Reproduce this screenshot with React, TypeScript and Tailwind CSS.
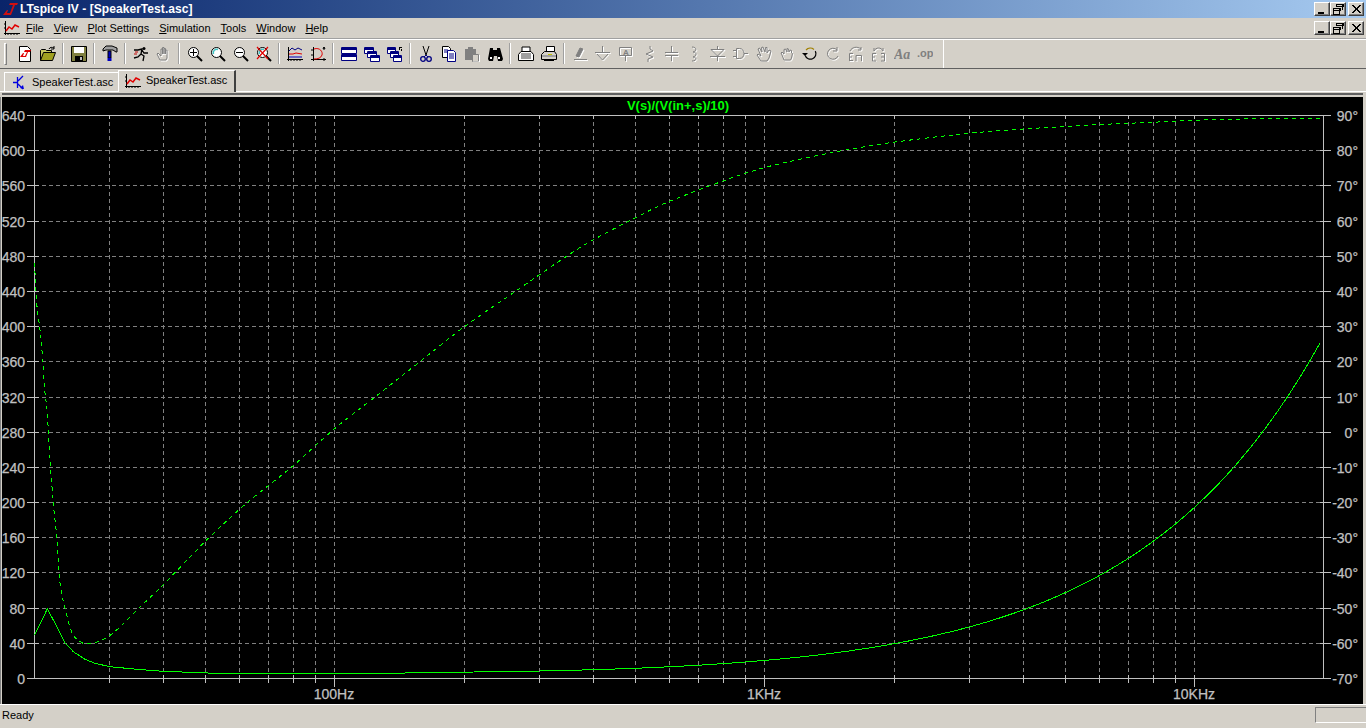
import type { ReactNode } from 'react';

const FONT = "font-['Liberation_Sans',Arial,sans-serif]";

// page coordinates of the plot box
const LEFT = 34.5;
const RIGHT = 1323.5;
const TOP = 115;
const BOTTOM = 678;

const freqX = (f: number) => 334.3 + 430 * Math.log10(f / 100);

const MINOR = [
  30, 40, 50, 60, 70, 80, 90, 100, 200, 300, 400, 500, 600, 700, 800, 900, 1000, 2000, 3000, 4000, 5000, 6000, 7000,
  8000, 9000, 10000,
];
const LEFT_LABELS = ['640', '600', '560', '520', '480', '440', '400', '360', '320', '280', '240', '200', '160', '120', '80', '40', '0'];
const RIGHT_LABELS = ['90°', '80°', '70°', '60°', '50°', '40°', '30°', '20°', '10°', '0°', '-10°', '-20°', '-30°', '-40°', '-50°', '-60°', '-70°'];

const MAG_LOW: [number, number][] = [
  [34.5, 635], [47.3, 609], [55, 623], [65, 642.7], [73.3, 651.7], [85, 659.3], [95, 663.3], [110, 666.7],
  [137, 669.3], [163, 671.3], [213, 673.2], [334, 673.6], [400, 673.2],
];
const PHASE_POINTS: [number, number][] = [
  [34.5, 263], [36.7, 303], [40, 330], [42.7, 360], [45, 393], [47.3, 413], [50, 460], [53.3, 503], [56.7, 537],
  [60, 583], [65, 608], [71.7, 632], [78, 640], [86.7, 644], [101.7, 640], [116.7, 630], [140, 607], [163, 585],
  [206.7, 540], [246.7, 503], [291.7, 467], [333, 430], [375, 397], [417, 364], [464, 327], [513, 293], [567, 256],
  [593, 240], [635, 218], [668, 202], [723, 181], [763, 168], [800, 159.3], [842, 150.7], [893, 142.3], [969, 133.3],
  [1023, 129], [1064, 126.7], [1098, 124.6], [1152, 122.3], [1195, 120.3], [1233, 119.3], [1273, 118.3], [1323, 118.3],
];

// above 200Hz the magnitude is just R + jwL
function magnitudePoints() {
  const pts = MAG_LOW.map(([x, y]) => `${x},${y}`);
  for (let x = 420; x <= 1323; x += 6) {
    const f = Math.pow(10, (x - 334.3) / 430) / 10;
    const xl = 19.2 * Math.pow(f, 1.004);
    const z = Math.sqrt(5.5 * 5.5 + xl * xl);
    pts.push(`${x},${(678 - z / 1.137).toFixed(1)}`);
  }
  return pts.join(' ');
}

// catmull-rom through the read-off points
function smoothPath(p: [number, number][]) {
  let d = `M${p[0][0]} ${p[0][1]}`;
  for (let i = 0; i < p.length - 1; i++) {
    const a = p[Math.max(i - 1, 0)];
    const b = p[i];
    const c = p[i + 1];
    const e = p[Math.min(i + 2, p.length - 1)];
    d += `C${(b[0] + (c[0] - a[0]) / 6).toFixed(1)} ${(b[1] + (c[1] - a[1]) / 6).toFixed(1)} ${(c[0] - (e[0] - b[0]) / 6).toFixed(1)} ${(c[1] - (e[1] - b[1]) / 6).toFixed(1)} ${c[0]} ${c[1]}`;
  }
  return d;
}

function Icon({ children, w = 16, h = 16 }: { children: ReactNode; w?: number; h?: number }) {
  return (
    <svg width={w} height={h} viewBox={`0 0 ${w} ${h}`} className="block shrink-0">
      {children}
    </svg>
  );
}

function Ghost({ d, fill }: { d: string; fill?: boolean }) {
  return (
    <>
      <path d={d} transform="translate(1 1)" stroke="#fff" fill={fill ? '#fff' : 'none'} />
      <path d={d} stroke="#808080" fill={fill ? '#808080' : 'none'} />
    </>
  );
}

function PlotGlyph() {
  return (
    <>
      <path d="M1.500 1v14M0 13.500h16M4 13v2M7 13v2M10 13v2M13 13v2M0 4h2M0 8h2" stroke="#000" fill="none" />
      <path d="M2 11l3-4 3 2 3-4 4 2" stroke="#e00000" strokeWidth="1.500" fill="none" />
    </>
  );
}

function Lens({ children }: { children?: ReactNode }) {
  return (
    <>
      <circle cx="6.500" cy="6.500" r="5" fill="#fff" stroke="#000" />
      {children}
      <path d="M10 10l5 5" stroke="#000" strokeWidth="2" />
    </>
  );
}

const ICONS: ReactNode[][] = [
  [
    <Icon key="new">
      <path d="M2.500 .5h8l3 3v12h-11z" fill="#fff" stroke="#000" />
      <path d="M3 11l3-4h1l-1 3h2l2-4H7l1-2h6l-1 2h-2l-2 5H3z" fill="#e00000" />
    </Icon>,
    <Icon key="open">
      <path d="M.5 14.500v-10l1-1h4l1 1h5v2" fill="#c8c860" stroke="#000" />
      <path d="M.5 14.500l3-8h12l-3 8z" fill="#a0a020" stroke="#000" />
      <path d="M9 3c1-2 3-2 5-1M14 0v3h-3" stroke="#000" fill="none" />
    </Icon>,
  ],
  [
    <Icon key="save">
      <path d="M.5 .5h15v15H.5z" fill="#808040" stroke="#000" />
      <path d="M3 1h10v6H3z" fill="#fff" />
      <path d="M4 10h8v5H4z" fill="#000" />
      <path d="M9 11h2v3H9z" fill="#c0c0c0" />
    </Icon>,
  ],
  [
    <Icon key="build" h={17}>
      <path d="M1 4l3-3h6l5 2v4h-1l-3-2H4L1 6z" fill="#a0a0a0" stroke="#000" />
      <path d="M6 6h3v7H6z" fill="#0000c0" stroke="#000" />
      <path d="M5.500 13h4v3h-4z" fill="#0000c0" />
    </Icon>,
  ],
  [
    <Icon key="run">
      <circle cx="11" cy="2.500" r="1.500" fill="#000" />
      <path d="M1 4h4l4-1-1 5 3 2-1 5M8 8l-3 3-4 1M9 4l2 3h4" stroke="#000" strokeWidth="1.300" fill="none" />
      <path d="M2 6h3M1 8h3" stroke="#c00000" />
    </Icon>,
    <Icon key="halt">
      <Ghost d="M4 14L1 8l1-1 3 3V3h1.500v5V1.500H8V8V2.500h1.500V8V4H11v8l-1 2z" />
    </Icon>,
  ],
  [
    <Icon key="zin">
      <Lens>
        <path d="M3 6.500h7M6.500 3v7" stroke="#000" />
      </Lens>
    </Icon>,
    <Icon key="zfit">
      <Lens>
        <path d="M3.500 8A3.500 3.500 0 0 1 8 3.500" stroke="#40c0c0" strokeWidth="1.500" fill="none" />
      </Lens>
    </Icon>,
    <Icon key="zout">
      <Lens>
        <path d="M3 6.500h7" stroke="#000" />
      </Lens>
    </Icon>,
    <Icon key="zcancel">
      <Lens>
        <path d="M3.500 8A3.500 3.500 0 0 1 8 3.500" stroke="#40c0c0" strokeWidth="1.500" fill="none" />
      </Lens>
      <path d="M1 1l11 12M12 1L1 13" stroke="#e00000" strokeWidth="1.200" />
    </Icon>,
  ],
  [
    <Icon key="plots">
      <path d="M1.500 1v14M0 13.500h16M4 13v2M7 13v2M10 13v2M13 13v2" stroke="#000" fill="none" />
      <path d="M2 5l3-3 3 2 3-2 4 2" stroke="#000080" fill="none" />
      <path d="M2 8h4l3-1 6 1" stroke="#e00000" fill="none" />
      <path d="M2 11h13" stroke="#0000c0" fill="none" />
    </Icon>,
    <Icon key="autoscale">
      <path d="M3.500 1v14M1 13.500h15M1 4h3M1 9h3M14 1v3M13 3l1-2 1 2M14 15v-3" stroke="#000" fill="none" />
      <path d="M4 3c6-2 9 3 8 6s-4 4-8 4" stroke="#e00000" fill="none" />
    </Icon>,
  ],
  [
    <Icon key="tile">
      <path d="M.5 1.500h15v6H.5zM.5 8.500h15v6H.5z" fill="#fff" stroke="#000080" />
      <path d="M1 2h14v2H1zM1 9h14v2H1z" fill="#000080" />
    </Icon>,
    <Icon key="cascade">
      <path d="M.5 1.500h9v6h-9z" fill="#fff" stroke="#000080" />
      <path d="M3.500 5.500h9v6h-9z" fill="#fff" stroke="#000080" />
      <path d="M6.500 9.500h9v6h-9z" fill="#fff" stroke="#000080" />
      <path d="M1 2h8v2H1zM4 6h8v2H4zM7 10h8v2H7z" fill="#000080" />
    </Icon>,
    <Icon key="arrange">
      <path d="M.5 1.500h8v6h-8z" fill="#fff" stroke="#000080" />
      <path d="M3.500 5.500h8v6h-8z" fill="#fff" stroke="#000080" />
      <path d="M6.500 9.500h8v6h-8z" fill="#fff" stroke="#000080" />
      <path d="M1 2h7v2H1zM4 6h7v2H4zM7 10h7v2H7z" fill="#000080" />
      <path d="M12 1h3v1h-2v2h-1zM14 3h1v2h-1z" fill="#000" />
    </Icon>,
  ],
  [
    <Icon key="cut">
      <path d="M5 0l3 9M11 0L8 9" stroke="#000" fill="none" />
      <path d="M8 9l-2 2M8 9l2 2" stroke="#000080" />
      <circle cx="5" cy="13" r="2.300" fill="none" stroke="#000080" strokeWidth="1.300" />
      <circle cx="11" cy="13" r="2.300" fill="none" stroke="#000080" strokeWidth="1.300" />
    </Icon>,
    <Icon key="copy">
      <path d="M1.500 .5h6l2 2v9h-8z" fill="#fff" stroke="#000" />
      <path d="M6.500 4.500h6l2 2v9h-8z" fill="#fff" stroke="#000080" />
      <path d="M3 4h4M3 6h3M8 8h5M8 10h5M8 12h5" stroke="#000080" />
    </Icon>,
    <Icon key="paste">
      <path d="M1 3h3V1h5v2h3v11H1z" fill="#808080" />
      <path d="M8.500 8.500h6v7h-6z" fill="#d4d0c8" stroke="#808080" />
      <path d="M15.500 9v7H9" stroke="#fff" fill="none" />
    </Icon>,
    <Icon key="find">
      <path d="M3 2h3v2h4V2h3l3 11-1 2h-4l-1-5H7l-1 5H2l-1-2z" fill="#000" />
      <path d="M3 11h2v2H3zM11 11h2v2h-2z" fill="#fff" />
    </Icon>,
  ],
  [
    <Icon key="preview">
      <path d="M4 1h8v5H4z" fill="#fff" stroke="#000" />
      <path d="M3 5.500h10l2.500 3v6H.5v-6z" fill="#fff" stroke="#000" />
      <path d="M3 7h10v6H3z" fill="#a0a0a0" />
    </Icon>,
    <Icon key="print">
      <path d="M5.500 .5h8v5h-8z" fill="#fff" stroke="#000" />
      <path d="M3.500 5.500h10l2 3v5H.5v-5z" fill="#d4d0c8" stroke="#000" />
      <path d="M1 9h14v2H1z" fill="#a0a0a0" />
      <path d="M7 8h4v1H7z" fill="#c0c000" />
      <path d="M3 14h10v1H3z" fill="#000" />
    </Icon>,
  ],
  [
    <Icon key="wire">
      <Ghost d="M4 10l4-8 3 1-4 8zM2 13.500h13" fill />
    </Icon>,
    <Icon key="gnd">
      <Ghost d="M7.500 0v6M0 6.500h15M2 8l5.500 6L13 8" />
    </Icon>,
    <Icon key="label">
      <Ghost d="M1.500 1.500h12v8h-12zM7.500 10v5" />
      <text x="5" y="8.500" fontSize="8" fontWeight="700" fill="#808080">
        A
      </text>
    </Icon>,
    <Icon key="res">
      <Ghost d="M9 0v3l3 2-7 3 7 3-5 2v3" />
    </Icon>,
    <Icon key="cap">
      <Ghost d="M7.500 0v6M1 6.500h13M1 9.500h13M7.500 10v5" />
    </Icon>,
    <Icon key="ind">
      <Ghost d="M5 1c5 0 5 4 1 5 4 0 4 4 0 5 4 0 4 4-1 4" />
    </Icon>,
    <Icon key="diode">
      <Ghost d="M7.500 0v3M1 3.500h13L7.500 10zM0 10.500h15M7.500 11v4" />
    </Icon>,
    <Icon key="comp">
      <Ghost d="M0 4.500h3M0 10.500h3M3.500 2.500h3c6 0 6 10 0 10h-3zM11 7.500h4" />
    </Icon>,
    <Icon key="move">
      <Ghost d="M5 15L1 9l1-1 3 2-3-7 1.500-1L6 6 5.500 1.500 7 1l2 5 .5-4.500H11L11 7l2-3 2 1-2 7-2 3z" />
    </Icon>,
    <Icon key="drag">
      <Ghost d="M5 14L3 9 2 7l1-1 2 2V3.500l1.500-.5L8 6V2.500L9.500 3 10 6l1-2 1.500.5V7l1 .5-1 4.500-1 2z" />
    </Icon>,
    <Icon key="undo">
      <path d="M4 4a6 6 0 0 1 8-.5" stroke="#a08000" strokeWidth="1.200" fill="none" />
      <path d="M12 3.500A5.500 5.500 0 1 1 4 11" stroke="#000" strokeWidth="1.200" fill="none" transform="rotate(20 8 8)" />
      <path d="M0 7h6L3 10z" fill="#000" />
    </Icon>,
    <Icon key="redo">
      <Ghost d="M12 4A5.500 5.500 0 1 0 13 10M12 1v4H8" />
    </Icon>,
    <Icon key="rotate">
      <Ghost d="M1.500 15V7.500H5M1.500 11H4M1.500 14.500H5M8 15V9.500h5.500V15M2 5C4 1 9 0 13 3M13 1v3h-3" />
    </Icon>,
    <Icon key="mirror">
      <Ghost d="M5 7.500H1.500v7.500H5M1.500 11H4M10 7.500h3.500v7.500H10M10 11h3M3 5c2-4 7-4 9 0M3 2v3M12 2v3" />
    </Icon>,
    <Icon key="text">
      <text x="0" y="13" fontSize="14" fontStyle="italic" fontWeight="700" fontFamily="'Liberation Serif',serif" fill="#808080">
        Aa
      </text>
    </Icon>,
    <Icon key="spice">
      <text x="0" y="11" fontSize="11" fontWeight="700" fill="#808080">
        .op
      </text>
    </Icon>,
  ],
];

function Separator() {
  return (
    <div className="w-[8px] h-[21px] flex justify-center shrink-0">
      <div className="w-[2px] h-full bg-[#a0a0a0] border-r border-white" />
    </div>
  );
}

function WinButtons() {
  return (
    <div className="flex items-center">
      <WinButton>
        <path d="M3 9h6v2H3z" fill="#000" />
      </WinButton>
      <WinButton>
        <path d="M5.500 1.500h6v5M5 1h7v2H5zM2.500 5.500h6v6h-6zM2 5h7v2H2z" fill="none" stroke="#000" strokeWidth="1" />
      </WinButton>
      <div className="w-[2px]" />
      <WinButton>
        <path d="M3 2l8 8M4 2l8 8M11 2l-8 8M12 2l-8 8" stroke="#000" fill="none" />
      </WinButton>
    </div>
  );
}

function WinButton({ children }: { children: ReactNode }) {
  return (
    <div className="w-[16px] h-[14px] bg-[#d4d0c8] border border-t-white border-l-white border-r-[#404040] border-b-[#404040] shadow-[inset_-1px_-1px_0_#808080] flex items-center justify-center">
      <svg width="14" height="12" viewBox="0 0 14 12" shapeRendering="crispEdges" className="block">
        {children}
      </svg>
    </div>
  );
}

function Chart() {
  const rows = LEFT_LABELS.map((_, i) => Math.round(TOP + ((BOTTOM - TOP) * i) / 16) + 0.5);
  return (
    <svg width="1361" height="607" viewBox="2 97 1361 607" className="block">
      <g shapeRendering="crispEdges" fill="none">
        {rows.slice(1, -1).map((y) => (
          <line key={y} x1={LEFT} x2={RIGHT} y1={y} y2={y} stroke="#808080" strokeDasharray="4 3" />
        ))}
        {MINOR.map((f) => {
          const x = Math.round(freqX(f)) + 0.5;
          return <line key={f} x1={x} x2={x} y1={TOP} y2={BOTTOM} stroke="#808080" strokeDasharray="4 3" />;
        })}
        {MINOR.map((f) => {
          const x = Math.round(freqX(f)) + 0.5;
          const major = f === 100 || f === 1000 || f === 10000;
          return (
            <g key={f} stroke="#c0c0c0">
              <line x1={x} x2={x} y1={TOP} y2={TOP + 4} />
              <line x1={x} x2={x} y1={BOTTOM - 3} y2={BOTTOM + (major ? 9 : 5)} />
            </g>
          );
        })}
        {rows.map((y) => (
          <g key={y} stroke="#c0c0c0">
            <line x1={27} x2={LEFT + 4} y1={y} y2={y} />
            <line x1={RIGHT - 4} x2={1331} y1={y} y2={y} />
          </g>
        ))}
        <rect x={LEFT} y={TOP + 0.5} width={RIGHT - LEFT} height={BOTTOM - TOP} stroke="#c0c0c0" />
        <path d={smoothPath(PHASE_POINTS)} stroke="#00ff00" strokeDasharray="4 4" />
        <polyline points={magnitudePoints()} stroke="#00ff00" />
      </g>
      <g fontSize="14" fill="#c0c0c0" stroke="#c0c0c0" strokeWidth=".25">
        {LEFT_LABELS.map((t, i) => (
          <text key={t} x="25" y={rows[i] + 5} textAnchor="end">
            {t}
          </text>
        ))}
        {RIGHT_LABELS.map((t, i) => (
          <text key={t} x="1358" y={rows[i] + 5} textAnchor="end">
            {t}
          </text>
        ))}
        <text x="334" y="699" textAnchor="middle">
          100Hz
        </text>
        <text x="764" y="699" textAnchor="middle">
          1KHz
        </text>
        <text x="1194" y="699" textAnchor="middle">
          10KHz
        </text>
      </g>
      <text x="678" y="110" textAnchor="middle" fontSize="13" fontWeight="700" fill="#00ff00">
        V(s)/(V(in+,s)/10)
      </text>
    </svg>
  );
}

const MENUS: [string, string][] = [
  ['F', 'ile'],
  ['V', 'iew'],
  ['P', 'lot Settings'],
  ['S', 'imulation'],
  ['T', 'ools'],
  ['W', 'indow'],
  ['H', 'elp'],
];

export default function App() {
  return (
    <div className={`w-[1366px] h-[728px] overflow-hidden flex flex-col bg-[#d4d0c8] text-black ${FONT}`}>
      {/* title bar */}
      <div className="h-[18px] shrink-0 flex items-center justify-between pl-[3px] pr-[2px] bg-linear-to-r from-[#0a246a] to-[#a6caf0]">
        <div className="flex items-center gap-[2px]">
          <svg width="15" height="13" viewBox="0 0 15 13" className="block">
            <path d="M0 12l4-5h1l-1 3h3l3-8H6L7 0h8l-1 2h-2L8 12z" fill="#d01010" />
          </svg>
          <span className="text-[12px] leading-none font-bold text-white tracking-[0.06px]">
            LTspice IV - [SpeakerTest.asc]
          </span>
        </div>
        <WinButtons />
      </div>

      {/* menu bar */}
      <div className="h-[20px] shrink-0 flex items-center justify-between pl-[4px] pr-[2px]">
        <div className="flex items-center">
          <Icon>
            <PlotGlyph />
          </Icon>
          <div className="flex items-center gap-[10px] ml-[6px] text-[11px] leading-none">
            {MENUS.map(([key, rest]) => (
              <span key={key}>
                <span className="underline">{key}</span>
                {rest}
              </span>
            ))}
          </div>
        </div>
        <WinButtons />
      </div>

      {/* toolbar */}
      <div className="h-[31px] shrink-0 flex items-center border-t border-t-[#a0a0a0] border-b border-b-[#606060] shadow-[inset_0_1px_0_#fff] pl-[4px]">
        <div className="w-[3px] h-[22px] shrink-0 bg-[#d4d0c8] border border-t-white border-l-white border-r-[#808080] border-b-[#808080]" />
        <div className="w-[6px] shrink-0" />
        {ICONS.map((group, i) => (
          <div key={i} className="flex items-center">
            {i > 0 && <Separator />}
            {group.map((icon, j) => (
              <div key={j} className="w-[23px] pl-[4px] shrink-0">
                {icon}
              </div>
            ))}
          </div>
        ))}
        <div className="w-[7px] shrink-0" />
        <div className="w-[1px] h-[28px] bg-white shrink-0" />
      </div>

      {/* document tabs */}
      <div className="h-[23px] shrink-0 flex items-end pl-[4px] border-b border-b-white">
        <div className="w-[114px] h-[19px] flex items-center gap-[7px] pl-[7px] pt-[1px] border-l border-t border-white">
          <svg width="13" height="15" viewBox="0 0 13 15" className="block shrink-0">
            <path d="M1 7.500h4M5.500 2v11M6 6l5-5M6 9l5 5" stroke="#0000e0" strokeWidth="1.300" fill="none" />
            <path d="M8 13l4 1-1-4z" fill="#0000e0" />
          </svg>
          <span className="text-[11px] leading-none">SpeakerTest.asc</span>
        </div>
        <div className="w-[118px] h-[22px] -mb-[1px] flex items-center gap-[5px] pl-[6px] pb-[2px] bg-[#d4d0c8] border-t border-l border-white border-r-2 border-r-[#404040]">
          <Icon>
            <PlotGlyph />
          </Icon>
          <span className="text-[11px] leading-none">SpeakerTest.asc</span>
        </div>
      </div>

      {/* sunken edge above the plot */}
      <div className="h-[5px] shrink-0 pt-[1px] pr-[3px] pl-[2px]">
        <div className="h-[2px] bg-[#606060]" />
      </div>

      {/* plot pane */}
      <div className="flex-1 min-h-0 flex pl-[2px] pr-[3px] border-l border-l-[#808080]">
        <div className="-ml-[1px] bg-black">
          <Chart />
        </div>
        <div className="w-[1px] bg-white" />
      </div>

      {/* status bar */}
      <div className="h-[24px] shrink-0 flex items-start justify-between border-t border-white">
        <span className="text-[11px] leading-[20px] pl-[2px]">Ready</span>
        <div className="w-[51px] h-[16px] mt-[2px] border-t border-l border-[#808080] border-b border-b-white" />
      </div>
    </div>
  );
}
